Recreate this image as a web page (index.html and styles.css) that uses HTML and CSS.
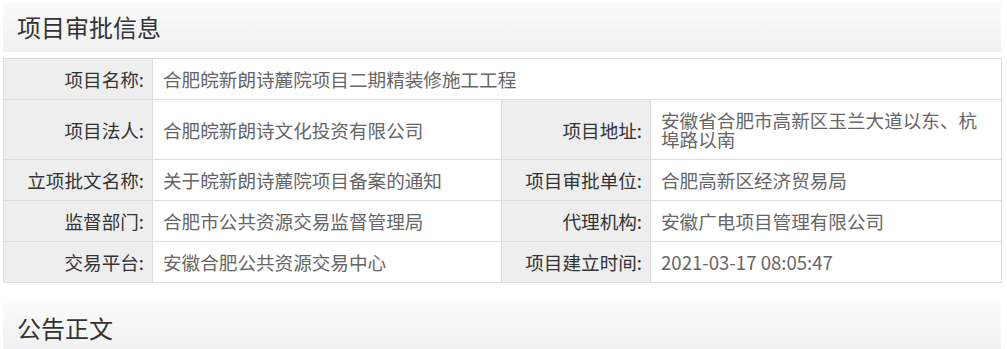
FILE: index.html
```html
<!DOCTYPE html>
<html lang="zh-CN">
<head>
<meta charset="utf-8">
<title>项目审批信息</title>
<link rel="stylesheet" href="styles.css">
</head>
<body>
<div class="page">
  <div class="section-title">项目审批信息</div>
  <table class="info">
    <colgroup>
      <col class="c-label">
      <col class="c-value">
      <col class="c-label">
      <col class="c-value2">
    </colgroup>
    <tr>
      <th>项目名称:</th>
      <td colspan="3">合肥皖新朗诗麓院项目二期精装修施工工程</td>
    </tr>
    <tr>
      <th>项目法人:</th>
      <td>合肥皖新朗诗文化投资有限公司</td>
      <th>项目地址:</th>
      <td>安徽省合肥市高新区玉兰大道以东、杭埠路以南</td>
    </tr>
    <tr>
      <th>立项批文名称:</th>
      <td>关于皖新朗诗麓院项目备案的通知</td>
      <th>项目审批单位:</th>
      <td>合肥高新区经济贸易局</td>
    </tr>
    <tr>
      <th>监督部门:</th>
      <td>合肥市公共资源交易监督管理局</td>
      <th>代理机构:</th>
      <td>安徽广电项目管理有限公司</td>
    </tr>
    <tr>
      <th>交易平台:</th>
      <td>安徽合肥公共资源交易中心</td>
      <th>项目建立时间:</th>
      <td>2021-03-17 08:05:47</td>
    </tr>
  </table>
  <div class="section-title second">公告正文</div>
</div>
</body>
</html>
```

FILE: styles.css
```css
html, body {
  margin: 0;
  padding: 0;
  background: #fff;
}
body {
  font-family: "Noto Sans CJK SC", "Microsoft YaHei", sans-serif;
  color: #333;
}
.page {
  width: 998px;
  margin: 2px 0 0 3px;
}
.section-title {
  height: 50px;
  line-height: 50px;
  padding-left: 14px;
  font-size: 24px;
  color: #333;
  background: linear-gradient(to bottom, #fbfbfb, #f0f0f0);
}
.section-title.second {
  margin-top: 20px;
}
.info {
  width: 998px;
  margin-top: 6px;
  border-collapse: collapse;
  table-layout: fixed;
  font-size: 18.6px;
}
.c-label { width: 149px; }
.c-value { width: 349px; }
.c-value2 { width: 351px; }
.info th,
.info td {
  border: 1px solid #dddddd;
  line-height: 19px;
  padding: 10px 10px 11px;
  vertical-align: middle;
}
.info th {
  background: #eeeeee;
  font-weight: normal;
  text-align: right;
  color: #333;
  padding-right: 8px;
  white-space: nowrap;
}
.info td {
  text-align: left;
  color: #666;
  background: #fff;
}
```
